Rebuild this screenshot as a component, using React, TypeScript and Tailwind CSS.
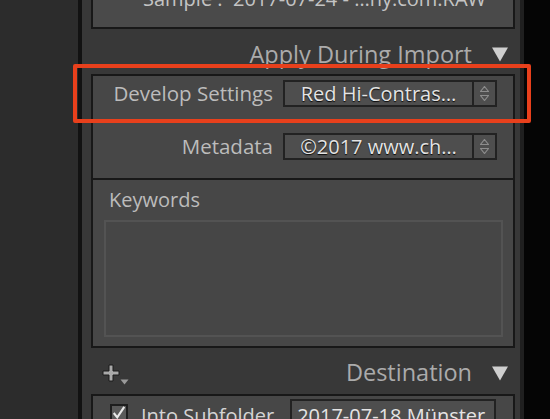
import React from 'react';

const font = { fontFamily: '"Open Sans", "Noto Sans", "Liberation Sans", sans-serif' };

function Stepper() {
  return (
    <div className="flex w-[23px] flex-col items-center justify-center gap-[3px] border-l-2 border-[#222]">
      <svg width="9" height="6" viewBox="0 0 9 6">
        <path d="M4.5 0.5 L8.5 5.5 L0.5 5.5 Z" fill="none" stroke="#8c8c8c" strokeWidth="1.2" />
      </svg>
      <svg width="9" height="6" viewBox="0 0 9 6">
        <path d="M0.5 0.5 L8.5 0.5 L4.5 5.5 Z" fill="none" stroke="#8c8c8c" strokeWidth="1.2" />
      </svg>
    </div>
  );
}

function Popup({ value }: { value: string }) {
  return (
    <div className="flex h-[27px] w-[214px] shrink-0 border-2 border-[#222] bg-[#4e4e4e]">
      <div className="flex flex-1 items-center justify-center text-[20px] leading-none text-[#e4e4e4] [text-shadow:0_1px_1px_rgba(0,0,0,0.9)]">
        {value}
      </div>
      <Stepper />
    </div>
  );
}

function Triangle() {
  return (
    <svg width="16" height="15" viewBox="0 0 16 15">
      <path d="M0 0.5 L16 0.5 L8 14.5 Z" fill="#cfcfcf" />
    </svg>
  );
}

export default function App() {
  return (
    <div className="flex h-[419px] w-[550px] overflow-hidden bg-black" style={font}>
      <div className="w-[78px] shrink-0 bg-[#2c2c2c]" />
      <div className="w-[4px] shrink-0 bg-[#121212]" />

      <div className="relative flex w-[438px] shrink-0 flex-col bg-[#383838] pl-[9px] pr-[5px]">
        {/* Sample box, scrolled off the top */}
        <div className="-mt-[31px] flex h-[60px] shrink-0 items-center border-2 border-[#181818] bg-[#4a4a4a] pl-[50px] text-[20px] text-[#c4c4c4]">
          Sample :&nbsp; 2017-07-24 - …ny.com.RAW
        </div>

        <div className="flex h-[45px] shrink-0 items-center justify-end gap-[20px] pr-[7px] pt-[6px] text-[23.5px] text-[#ababab]">
          <span>Apply During Import</span>
          <Triangle />
        </div>

        <div className="flex h-[106px] shrink-0 flex-col gap-[26px] border-2 border-[#181818] bg-[#474747] pt-[4px]">
          <div className="flex h-[27px] items-center gap-[10px]">
            <span className="w-[180px] text-right text-[20.5px] leading-none text-[#bcbcbc]">Develop Settings</span>
            <Popup value="Red Hi-Contras…" />
          </div>
          <div className="flex h-[27px] items-center gap-[10px]">
            <span className="w-[180px] text-right text-[20.5px] leading-none text-[#bcbcbc]">Metadata</span>
            <Popup value="©2017 www.ch…" />
          </div>
        </div>

        <div className="flex h-[168px] shrink-0 flex-col border-2 border-t-0 border-[#181818] bg-[#474747] px-[11px] pb-[9px] pr-[10px]">
          <div className="pl-[5px] pt-[6px] text-[20px] leading-[28px] text-[#bcbcbc]">Keywords</div>
          <div className="mt-[6px] flex-1 border-2 border-[#535353] bg-[#464646]" />
        </div>

        <div className="flex h-[46px] shrink-0 items-center justify-between pl-[11px] pr-[7px] pt-[4px]">
          <div className="flex items-end">
            <svg width="18" height="18" viewBox="0 0 18 18">
              <path d="M7 1 H11 V7 H17 V11 H11 V17 H7 V11 H1 V7 H7 Z" fill="#a9a9a9" stroke="#1a1a1a" strokeWidth="1" />
            </svg>
            <svg width="9" height="6" viewBox="0 0 9 6" className="mb-[-3px]">
              <path d="M0.5 0.5 L8.5 0.5 L4.5 5.5 Z" fill="#9a9a9a" />
            </svg>
          </div>
          <div className="flex items-center gap-[20px] text-[23.5px] text-[#ababab]">
            <span>Destination</span>
            <Triangle />
          </div>
        </div>

        <div className="flex h-[40px] shrink-0 items-start border-2 border-[#181818] bg-[#474747] pl-[17px] pt-[8px]">
          <div className="flex h-[18px] w-[18px] shrink-0 items-center justify-center border-2 border-[#1e1e1e] bg-[#5a5a5a]">
            <svg width="16" height="16" viewBox="0 0 16 16">
              <path d="M2 8 L6 13 L14 1" fill="none" stroke="#e8e8e8" strokeWidth="2.4" />
            </svg>
          </div>
          <span className="ml-[13px] mt-[-3px] text-[20px] text-[#d4d4d4]">Into Subfolder</span>
          <div className="ml-[16px] mt-[-5px] h-[30px] w-[206px] shrink-0 border-2 border-[#222] bg-[#4e4e4e] pl-[5px] text-[20px] text-[#e4e4e4]">
            2017-07-18 Münster
          </div>
        </div>

        {/* hand-drawn red annotation */}
        <div className="pointer-events-none absolute left-[-9px] top-[64px] h-[59px] w-[458px] rounded-[2px] border-4 border-[#e8401c]" />
      </div>

      <div className="w-[4px] shrink-0 bg-[#202020]" />
      <div className="flex-1 bg-[#050505]" />
    </div>
  );
}
